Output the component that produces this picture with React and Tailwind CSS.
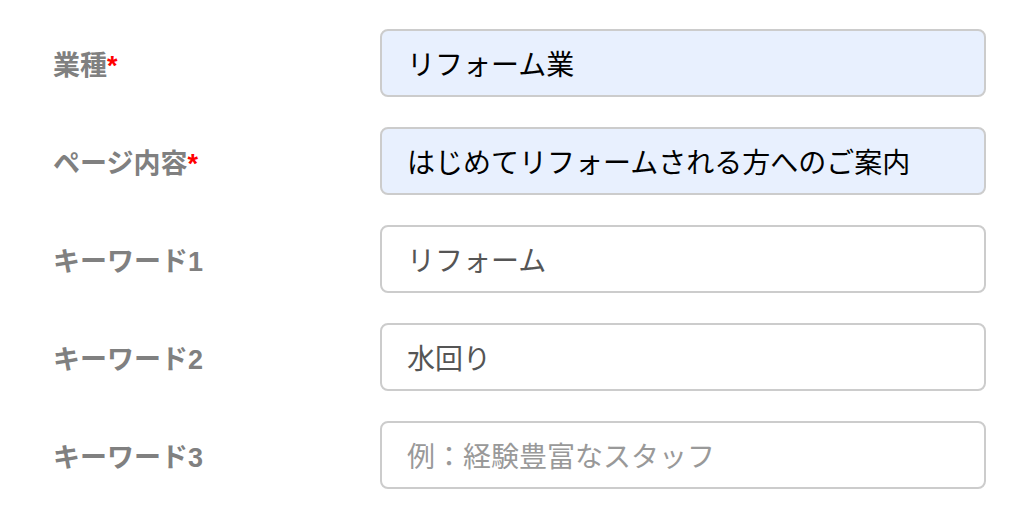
import React from "react";

const rows = [
  { label: "業種", req: true, value: "リフォーム業", auto: true },
  { label: "ページ内容", req: true, value: "はじめてリフォームされる方へのご案内", auto: true },
  { label: "キーワード1", value: "リフォーム" },
  { label: "キーワード2", value: "水回り" },
  { label: "キーワード3", placeholder: "例：経験豊富なスタッフ" },
];

export default function App() {
  return (
    <div
      className="w-[1029px] h-[521px] bg-white pt-[29px] pl-[53px] flex flex-col gap-[30px]"
      style={{ fontFamily: '"Noto Sans CJK JP", "Noto Sans", sans-serif' }}
    >
      {rows.map((r, i) => (
        <div key={i} className="flex items-center h-[68px]">
          <div
            className="w-[327px] pt-[6px] text-[27px] font-bold text-[#808080] leading-none"
            style={{ fontFamily: '"Liberation Sans", "Noto Sans CJK JP", sans-serif' }}
          >
            {r.label}
            {r.req && <span className="text-[#ff0000]">*</span>}
          </div>
          <div
            className={`w-[606px] h-[68px] rounded-[8px] border-2 border-[#cccccc] flex items-center pl-[25px] text-[28px] leading-none ${
              r.auto ? "bg-[#e8f0fe] text-black" : "bg-white text-[#555555]"
            }`}
          >
            {r.value ? r.value : <span className="text-[#999999]">{r.placeholder}</span>}
          </div>
        </div>
      ))}
    </div>
  );
}
